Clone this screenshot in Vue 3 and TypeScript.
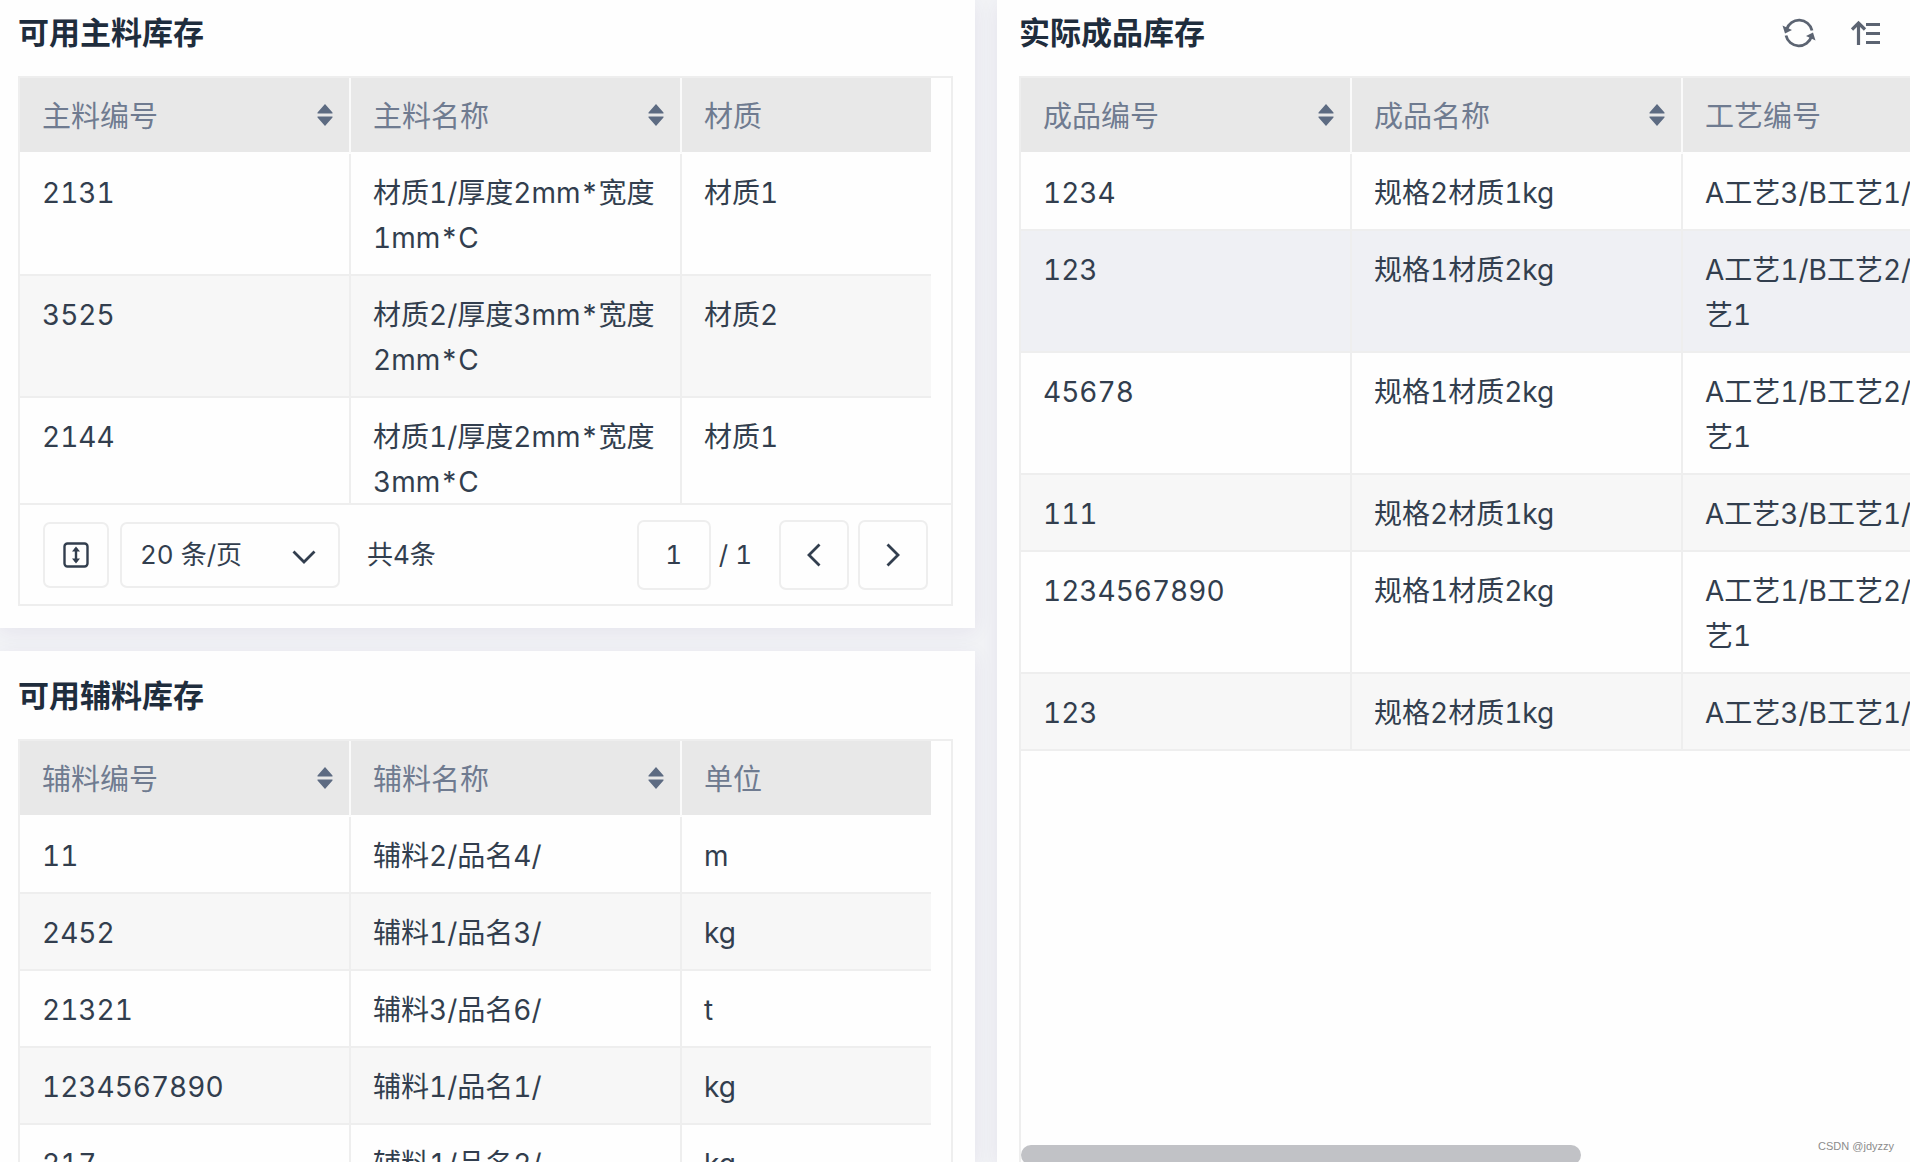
<script setup lang="ts">
import { ref } from 'vue'

interface Column {
  label: string
  sortable?: boolean
}

interface Row {
  cells: string[]
  active?: boolean
}

const mainColumns: Column[] = [
  { label: '主料编号', sortable: true },
  { label: '主料名称', sortable: true },
  { label: '材质' },
]
const mainRows: Row[] = [
  { cells: ['2131', '材质1/厚度2mm*宽度\n1mm*C', '材质1'] },
  { cells: ['3525', '材质2/厚度3mm*宽度\n2mm*C', '材质2'] },
  { cells: ['2144', '材质1/厚度2mm*宽度\n3mm*C', '材质1'] },
]

const auxColumns: Column[] = [
  { label: '辅料编号', sortable: true },
  { label: '辅料名称', sortable: true },
  { label: '单位' },
]
const auxRows: Row[] = [
  { cells: ['11', '辅料2/品名4/', 'm'] },
  { cells: ['2452', '辅料1/品名3/', 'kg'] },
  { cells: ['21321', '辅料3/品名6/', 't'] },
  { cells: ['1234567890', '辅料1/品名1/', 'kg'] },
  { cells: ['217', '辅料1/品名2/', 'kg'] },
]

const productColumns: Column[] = [
  { label: '成品编号', sortable: true },
  { label: '成品名称', sortable: true },
  { label: '工艺编号' },
]
const productRows: Row[] = [
  { cells: ['1234', '规格2材质1kg', 'A工艺3/B工艺1/'] },
  { cells: ['123', '规格1材质2kg', 'A工艺1/B工艺2/\n艺1'], active: true },
  { cells: ['45678', '规格1材质2kg', 'A工艺1/B工艺2/\n艺1'] },
  { cells: ['111', '规格2材质1kg', 'A工艺3/B工艺1/'] },
  { cells: ['1234567890', '规格1材质2kg', 'A工艺1/B工艺2/\n艺1'] },
  { cells: ['123', '规格2材质1kg', 'A工艺3/B工艺1/'] },
]

const pageSize = ref('20')
const page = ref('1')
</script>

<template>
  <main class="page">
    <div class="column">
      <section class="panel panel-first">
        <header class="panel-head"><h2>可用主料库存</h2></header>
        <div class="box">
          <div class="scroll scroll-fixed">
            <table>
              <colgroup><col class="col-fixed" /><col class="col-fixed" /><col /></colgroup>
              <thead>
                <tr>
                  <th v-for="c in mainColumns" :key="c.label" scope="col">
                    <div class="th">
                      <span>{{ c.label }}</span>
                      <button v-if="c.sortable" class="sort" type="button" aria-label="排序">
                        <svg width="16" height="22" viewBox="0 0 16 22"><path d="M8 0l7.5 8.5v1H.5v-1zM8 22l7.5-8.5v-1H.5v1z" /></svg>
                      </button>
                    </div>
                  </th>
                </tr>
              </thead>
              <tbody>
                <tr v-for="(r, i) in mainRows" :key="i">
                  <td v-for="(cell, j) in r.cells" :key="j">{{ cell }}</td>
                </tr>
              </tbody>
            </table>
          </div>
          <footer class="pager">
            <button class="btn btn-small" type="button" aria-label="行高">
              <svg width="26" height="26" viewBox="0 0 26 26" fill="none" stroke="currentColor" stroke-width="2.4">
                <rect x="1.5" y="1.5" width="23" height="23" rx="3" />
                <path d="M13 6v14" />
                <path d="M9 9.500L13 4.500l4 5zM9 16.500l4 5 4-5z" fill="currentColor" stroke="none" />
              </svg>
            </button>
            <div class="select">
              <select v-model="pageSize" aria-label="每页条数">
                <option value="20">20 条/页</option>
              </select>
              <svg width="24" height="14" viewBox="0 0 24 14" fill="none" stroke="currentColor" stroke-width="2.8"><path d="M1.500 1.500L12 12 22.500 1.500" /></svg>
            </div>
            <span class="total">共4条</span>
            <input v-model="page" class="page-input" type="text" aria-label="页码" />
            <span class="pages">/ 1</span>
            <button class="btn btn-prev" type="button" aria-label="上一页">
              <svg width="14" height="24" viewBox="0 0 14 24" fill="none" stroke="currentColor" stroke-width="2.800"><path d="M12.500 1.500L2 12l10.500 10.500" /></svg>
            </button>
            <button class="btn" type="button" aria-label="下一页">
              <svg width="14" height="24" viewBox="0 0 14 24" fill="none" stroke="currentColor" stroke-width="2.800"><path d="M1.500 1.500L12 12 1.500 22.500" /></svg>
            </button>
          </footer>
        </div>
      </section>

      <section class="panel panel-fill">
        <header class="panel-head"><h2>可用辅料库存</h2></header>
        <div class="box box-fill">
          <div class="scroll">
            <table>
              <colgroup><col class="col-fixed" /><col class="col-fixed" /><col /></colgroup>
              <thead>
                <tr>
                  <th v-for="c in auxColumns" :key="c.label" scope="col">
                    <div class="th">
                      <span>{{ c.label }}</span>
                      <button v-if="c.sortable" class="sort" type="button" aria-label="排序">
                        <svg width="16" height="22" viewBox="0 0 16 22"><path d="M8 0l7.5 8.5v1H.5v-1zM8 22l7.5-8.5v-1H.5v1z" /></svg>
                      </button>
                    </div>
                  </th>
                </tr>
              </thead>
              <tbody>
                <tr v-for="(r, i) in auxRows" :key="i">
                  <td v-for="(cell, j) in r.cells" :key="j">{{ cell }}</td>
                </tr>
              </tbody>
            </table>
          </div>
        </div>
      </section>
    </div>

    <section class="panel panel-first panel-right">
      <header class="panel-head">
        <h2>实际成品库存</h2>
        <div class="tools">
          <button type="button" aria-label="刷新">
            <svg width="34" height="32" viewBox="0 0 34 32" fill="none" stroke="currentColor" stroke-width="2.800">
              <path d="M4.500 12.500A13.200 13.200 0 0 1 30 13.500" />
              <path d="M29.500 19.500A13.200 13.200 0 0 1 4 18.500" />
              <path d="M.5 8.500l2.500 8 7-3.500zM33.500 23.500l-2.500-8-7 3.500z" fill="currentColor" stroke="none" />
            </svg>
          </button>
          <button type="button" aria-label="排序">
            <svg width="30" height="26" viewBox="0 0 30 26" fill="none" stroke="currentColor" stroke-width="3.200">
              <path d="M7.500 25V3M1 9.500L7.500 3 14 9.500M15 4.500h14M15 13.500h14M15 22.500h14" />
            </svg>
          </button>
        </div>
      </header>
      <div class="box box-fill box-open">
        <table>
          <colgroup><col class="col-fixed" /><col class="col-fixed" /><col /></colgroup>
          <thead>
            <tr>
              <th v-for="c in productColumns" :key="c.label" scope="col">
                <div class="th">
                  <span>{{ c.label }}</span>
                  <button v-if="c.sortable" class="sort" type="button" aria-label="排序">
                    <svg width="16" height="22" viewBox="0 0 16 22"><path d="M8 0l7.5 8.5v1H.5v-1zM8 22l7.5-8.5v-1H.5v1z" /></svg>
                  </button>
                </div>
              </th>
            </tr>
          </thead>
          <tbody>
            <tr v-for="(r, i) in productRows" :key="i" :class="{ active: r.active }">
              <td v-for="(cell, j) in r.cells" :key="j">{{ cell }}</td>
            </tr>
          </tbody>
        </table>
        <div class="scrollbar"></div>
      </div>
    </section>
    <span class="watermark">CSDN @jdyzzy</span>
  </main>
</template>

<style>
body {
  margin: 0;
  background: #f2f3f6;
}
</style>

<style scoped>
* {
  box-sizing: border-box;
}

.page {
  position: relative;
  display: grid;
  grid-template-columns: minmax(0, 975fr) minmax(0, 913fr);
  gap: 22px;
  height: 100vh;
  overflow: hidden;
  background: #f2f3f6;
  color: #323e4e;
  font-family: Inter, 'Noto Sans CJK SC', sans-serif;
  font-size: 28px;
  line-height: 45px;
  font-variant-numeric: tabular-nums;
}

.column {
  display: flex;
  flex-direction: column;
  gap: 23px;
  min-height: 0;
}

.panel {
  display: flex;
  flex-direction: column;
  padding: 23px 22px 22px 18px;
  background: #fefefe;
  box-shadow: 0 4px 20px rgba(60, 30, 110, 0.07);
}

.panel-first {
  padding-top: 11px;
}

.panel-fill {
  flex: 1;
  min-height: 0;
  padding-bottom: 0;
}

.panel-right {
  min-height: 0;
  padding: 11px 0 0 22px;
}

.panel-head {
  display: flex;
  flex: none;
  align-items: flex-start;
  justify-content: space-between;
  height: 65px;
}

h2 {
  margin: 0;
  color: #1f2d3d;
  font-size: 31px;
  font-weight: 600;
  line-height: 44px;
}

button,
input,
select {
  margin: 0;
  padding: 0;
  border: 0;
  background: none;
  color: inherit;
  font: inherit;
}

button svg {
  display: block;
}

.tools {
  display: flex;
  align-items: center;
  gap: 35px;
  height: 44px;
  padding-right: 29px;
  color: #5c6472;
}

.box {
  position: relative;
  border: 2px solid #eeeeee;
}

.box-fill {
  flex: 1;
  min-height: 0;
  border-bottom: 0;
  overflow: hidden;
}

.box-open {
  border-right: 0;
}

.scroll {
  height: 100%;
  padding-right: 20px;
  overflow: hidden;
}

.scroll-fixed {
  height: 425px;
}

table {
  width: 100%;
  border-collapse: separate;
  border-spacing: 0;
  table-layout: fixed;
}

.col-fixed {
  width: 331px;
}

th {
  height: 76px;
  padding: 0 16px 0 22px;
  border-right: 2px solid #fafafa;
  border-bottom: 2px solid #fefefe;
  background: #e8e8e8;
  color: #6f7b90;
  font-size: 29px;
  font-weight: 400;
  text-align: left;
}

th:last-child,
td:last-child {
  border-right: 0;
}

.th {
  display: flex;
  align-items: center;
  justify-content: space-between;
  padding-top: 2px;
}

.sort {
  margin-bottom: 2px;
  fill: #5d6b82;
}

td {
  padding: 17px 0 13px 22px;
  border-right: 2px solid #eeeeee;
  border-bottom: 2px solid #eeeeee;
  vertical-align: top;
  white-space: pre;
}

tbody tr:nth-child(even) td {
  background: #f7f7f7;
}

tbody tr.active td {
  background: #eff0f4;
}

.pager {
  display: flex;
  align-items: center;
  height: 101px;
  padding: 0 23px;
  border-top: 2px solid #eeeeee;
  font-size: 26px;
}

.btn,
.select,
.page-input {
  flex: none;
  border: 2px solid #eeeeee;
  border-radius: 7px;
}

.btn {
  display: flex;
  align-items: center;
  justify-content: center;
  width: 70px;
  height: 70px;
}

.btn-small {
  width: 66px;
  height: 66px;
}

.select {
  position: relative;
  width: 220px;
  height: 66px;
  margin-left: 11px;
}

.select select {
  width: 100%;
  height: 100%;
  padding-left: 18px;
  appearance: none;
}

.select svg {
  position: absolute;
  top: 26px;
  right: 22px;
  pointer-events: none;
}

.total {
  margin-left: 27px;
}

.page-input {
  width: 74px;
  height: 70px;
  margin-left: auto;
  text-align: center;
}

.pages {
  margin-left: 8px;
}

.btn-prev {
  margin: 0 9px 0 27px;
}

.scrollbar {
  position: absolute;
  bottom: -3px;
  left: 0;
  width: 63%;
  height: 20px;
  border-radius: 10px;
  background: #c1c2c6;
}

.watermark {
  position: absolute;
  right: 16px;
  bottom: 8px;
  color: #8c8c8c;
  font-family: 'Liberation Sans', sans-serif;
  font-size: 11px;
  line-height: 16px;
}
</style>
